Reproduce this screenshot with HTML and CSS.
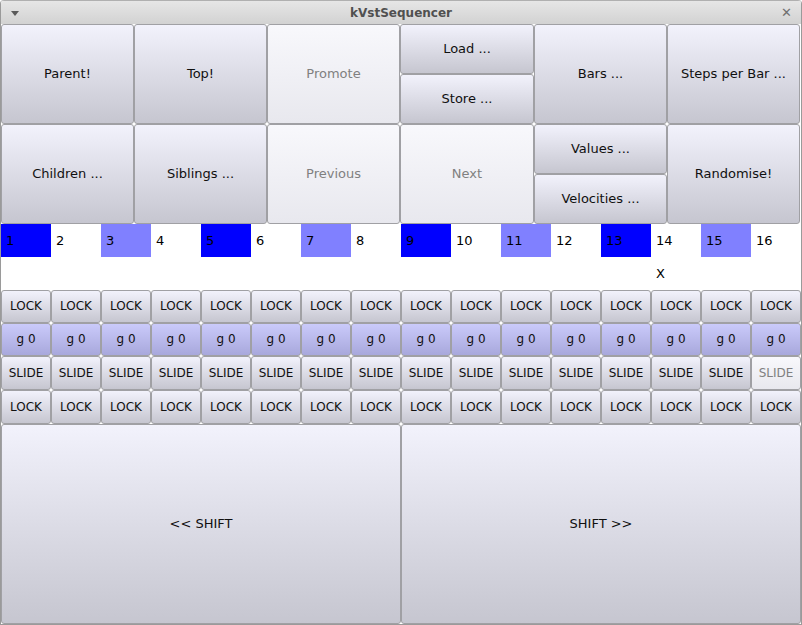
FILE: index.html
```html
<!DOCTYPE html>
<html>
<head>
<meta charset="utf-8">
<link rel="stylesheet" href="styles.css">
</head>
<body>
<div class="window">
  <div class="titlebar">
    <span class="menu-arrow"></span>
    <span class="title">kVstSequencer</span>
    <span class="close">✕</span>
  </div>
  <div class="content">
    <div class="topgrid">
      <button class="btn">Parent!</button>
      <button class="btn">Top!</button>
      <button class="btn disabled">Promote</button>
      <div class="stack"><button class="btn">Load ...</button><button class="btn">Store ...</button></div>
      <button class="btn">Bars ...</button>
      <button class="btn">Steps per Bar ...</button>
      <button class="btn">Children ...</button>
      <button class="btn">Siblings ...</button>
      <button class="btn disabled">Previous</button>
      <button class="btn disabled">Next</button>
      <div class="stack"><button class="btn">Values ...</button><button class="btn">Velocities ...</button></div>
      <button class="btn">Randomise!</button>
    </div>
    <div class="steps">
      <div class="step blue">1</div><div class="step">2</div><div class="step light">3</div><div class="step">4</div>
      <div class="step blue">5</div><div class="step">6</div><div class="step light">7</div><div class="step">8</div>
      <div class="step blue">9</div><div class="step">10</div><div class="step light">11</div><div class="step">12</div>
      <div class="step blue">13</div><div class="step">14</div><div class="step light">15</div><div class="step">16</div>
    </div>
    <div class="marks">
      <div class="mark"></div><div class="mark"></div><div class="mark"></div><div class="mark"></div>
      <div class="mark"></div><div class="mark"></div><div class="mark"></div><div class="mark"></div>
      <div class="mark"></div><div class="mark"></div><div class="mark"></div><div class="mark"></div>
      <div class="mark"></div><div class="mark">X</div><div class="mark"></div><div class="mark"></div>
    </div>
    <div class="row r33">
      <button class="btn sm">LOCK</button><button class="btn sm">LOCK</button><button class="btn sm">LOCK</button><button class="btn sm">LOCK</button>
      <button class="btn sm">LOCK</button><button class="btn sm">LOCK</button><button class="btn sm">LOCK</button><button class="btn sm">LOCK</button>
      <button class="btn sm">LOCK</button><button class="btn sm">LOCK</button><button class="btn sm">LOCK</button><button class="btn sm">LOCK</button>
      <button class="btn sm">LOCK</button><button class="btn sm">LOCK</button><button class="btn sm">LOCK</button><button class="btn sm">LOCK</button>
    </div>
    <div class="row r33">
      <button class="btn sm gate">g 0</button><button class="btn sm gate">g 0</button><button class="btn sm gate">g 0</button><button class="btn sm gate">g 0</button>
      <button class="btn sm gate">g 0</button><button class="btn sm gate">g 0</button><button class="btn sm gate">g 0</button><button class="btn sm gate">g 0</button>
      <button class="btn sm gate">g 0</button><button class="btn sm gate">g 0</button><button class="btn sm gate">g 0</button><button class="btn sm gate">g 0</button>
      <button class="btn sm gate">g 0</button><button class="btn sm gate">g 0</button><button class="btn sm gate">g 0</button><button class="btn sm gate">g 0</button>
    </div>
    <div class="row r34">
      <button class="btn sm">SLIDE</button><button class="btn sm">SLIDE</button><button class="btn sm">SLIDE</button><button class="btn sm">SLIDE</button>
      <button class="btn sm">SLIDE</button><button class="btn sm">SLIDE</button><button class="btn sm">SLIDE</button><button class="btn sm">SLIDE</button>
      <button class="btn sm">SLIDE</button><button class="btn sm">SLIDE</button><button class="btn sm">SLIDE</button><button class="btn sm">SLIDE</button>
      <button class="btn sm">SLIDE</button><button class="btn sm">SLIDE</button><button class="btn sm">SLIDE</button><button class="btn sm disabled">SLIDE</button>
    </div>
    <div class="row r34">
      <button class="btn sm">LOCK</button><button class="btn sm">LOCK</button><button class="btn sm">LOCK</button><button class="btn sm">LOCK</button>
      <button class="btn sm">LOCK</button><button class="btn sm">LOCK</button><button class="btn sm">LOCK</button><button class="btn sm">LOCK</button>
      <button class="btn sm">LOCK</button><button class="btn sm">LOCK</button><button class="btn sm">LOCK</button><button class="btn sm">LOCK</button>
      <button class="btn sm">LOCK</button><button class="btn sm">LOCK</button><button class="btn sm">LOCK</button><button class="btn sm">LOCK</button>
    </div>
    <div class="shift">
      <button class="btn">&lt;&lt; SHIFT</button>
      <button class="btn">SHIFT &gt;&gt;</button>
    </div>
  </div>
</div>
</body>
</html>
```
FILE: styles.css
```css
* { box-sizing: border-box; }
html, body { margin: 0; padding: 0; background: #ffffff; }
body { font-family: "DejaVu Sans", sans-serif; font-size: 13px; color: #000; }

.window {
  width: 802px;
  height: 625px;
  display: flex;
  flex-direction: column;
  background: #ffffff;
  border-left: 1px solid #9a9a9a;
  border-right: 1px solid #9a9a9a;
  border-bottom: 1px solid #9a9a9a;
  border-radius: 4px 4px 0 0;
  overflow: hidden;
}

.titlebar {
  height: 24px;
  flex: none;
  display: flex;
  align-items: center;
  justify-content: space-between;
  padding: 0 9px 0 10px;
  background: linear-gradient(#e6e6e6, #d2d2d2);
  border-top: 1px solid #b0b0b0;
}
.menu-arrow {
  width: 0; height: 0;
  border-left: 4px solid transparent;
  border-right: 4px solid transparent;
  border-top: 5px solid #5a5a5a;
  margin-top: 1px;
}
.title {
  font-size: 12px;
  font-weight: bold;
  color: #505050;
  margin-left: 2px;
}
.close {
  font-size: 13px;
  color: #707070;
  font-weight: bold;
}

.content { flex: 1; display: flex; flex-direction: column; }

.btn {
  font-family: "DejaVu Sans", sans-serif;
  font-size: 13px;
  color: #101010;
  background: linear-gradient(#f2f2fc, #c6c6d0);
  border: 1px solid #a0a0a4;
  border-radius: 3px;
  margin: 0;
  padding: 0 0 1px 0;
  min-width: 0;
  display: flex;
  align-items: center;
  justify-content: center;
}
.btn.disabled {
  background: linear-gradient(#f8f8fc, #e8e8ee);
  color: #808080;
}
.btn.gate {
  background: linear-gradient(#cacafa, #a8a8dc);
}

.topgrid {
  display: grid;
  grid-template-columns: 133px 133px 133px 134px 133px 133px;
  grid-template-rows: 100px 100px;
  flex: none;
}
.stack { display: grid; grid-template-rows: 50px 50px; }

.steps, .marks, .row {
  display: grid;
  grid-template-columns: repeat(16, 50px);
  flex: none;
}
.step {
  height: 33px;
  line-height: 33px;
  padding-left: 5px;
  font-size: 13px;
}
.step.blue { background: #0000ff; }
.step.light { background: #8080ff; }
.mark {
  height: 33px;
  line-height: 33px;
  padding-left: 5px;
}
.r33 { height: 33px; }
.r34 { height: 34px; }
.sm { font-size: 12px; height: 100%; }

.shift {
  flex: 1;
  display: grid;
  grid-template-columns: 400px 400px;
}
```
